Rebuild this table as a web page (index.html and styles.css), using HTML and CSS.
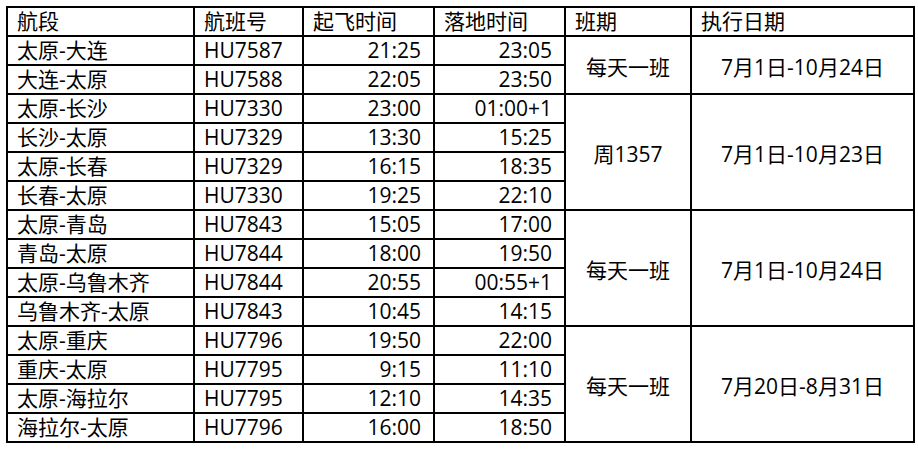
FILE: index.html
```html
<!DOCTYPE html>
<html lang="zh-CN">
<head>
<meta charset="utf-8">
<title>航班时刻表</title>
<link rel="stylesheet" href="styles.css">
</head>
<body>
<table class="sched">
  <colgroup>
    <col class="c-seg"><col class="c-no"><col class="c-dep"><col class="c-arr"><col class="c-per"><col class="c-date">
  </colgroup>
  <thead>
    <tr><th>航段</th><th>航班号</th><th>起飞时间</th><th>落地时间</th><th>班期</th><th>执行日期</th></tr>
  </thead>
  <tbody>
    <tr><td>太原-大连</td><td>HU7587</td><td class="t">21:25</td><td class="t">23:05</td><td class="m" rowspan="2">每天一班</td><td class="m" rowspan="2">7月1日-10月24日</td></tr>
    <tr><td>大连-太原</td><td>HU7588</td><td class="t">22:05</td><td class="t">23:50</td></tr>
    <tr><td>太原-长沙</td><td>HU7330</td><td class="t">23:00</td><td class="t">01:00+1</td><td class="m" rowspan="4">周1357</td><td class="m" rowspan="4">7月1日-10月23日</td></tr>
    <tr><td>长沙-太原</td><td>HU7329</td><td class="t">13:30</td><td class="t">15:25</td></tr>
    <tr><td>太原-长春</td><td>HU7329</td><td class="t">16:15</td><td class="t">18:35</td></tr>
    <tr><td>长春-太原</td><td>HU7330</td><td class="t">19:25</td><td class="t">22:10</td></tr>
    <tr><td>太原-青岛</td><td>HU7843</td><td class="t">15:05</td><td class="t">17:00</td><td class="m" rowspan="4">每天一班</td><td class="m" rowspan="4">7月1日-10月24日</td></tr>
    <tr><td>青岛-太原</td><td>HU7844</td><td class="t">18:00</td><td class="t">19:50</td></tr>
    <tr><td>太原-乌鲁木齐</td><td>HU7844</td><td class="t">20:55</td><td class="t">00:55+1</td></tr>
    <tr><td>乌鲁木齐-太原</td><td>HU7843</td><td class="t">10:45</td><td class="t">14:15</td></tr>
    <tr><td>太原-重庆</td><td>HU7796</td><td class="t">19:50</td><td class="t">22:00</td><td class="m" rowspan="4">每天一班</td><td class="m" rowspan="4">7月20日-8月31日</td></tr>
    <tr><td>重庆-太原</td><td>HU7795</td><td class="t">9:15</td><td class="t">11:10</td></tr>
    <tr><td>太原-海拉尔</td><td>HU7795</td><td class="t">12:10</td><td class="t">14:35</td></tr>
    <tr><td>海拉尔-太原</td><td>HU7796</td><td class="t">16:00</td><td class="t">18:50</td></tr>
  </tbody>
</table>
</body>
</html>
```
FILE: styles.css
```css
html, body {
  margin: 0;
  background: #fff;
}
body {
  padding: 6px 0 0 6px;
  font-family: "Open Sans", "Noto Sans CJK SC", sans-serif;
  font-size: 21px;
  color: #000;
}
.sched {
  border-collapse: collapse;
  table-layout: fixed;
  width: 907px;
}
.c-seg { width: 187px; }
.c-no { width: 109px; }
.c-dep { width: 131px; }
.c-arr { width: 131px; }
.c-per { width: 126px; }
.c-date { width: 223px; }
.sched th,
.sched td {
  border: 2px solid #000;
  height: 29px;
  padding: 0 10px 0 9px;
  box-sizing: border-box;
  line-height: 25px;
  font-weight: 400;
  text-align: left;
  white-space: nowrap;
  vertical-align: middle;
}
.sched td.t {
  text-align: right;
  padding-right: 12px;
}
.sched td.m {
  text-align: center;
  padding: 4px 0 0 0;
}
```
